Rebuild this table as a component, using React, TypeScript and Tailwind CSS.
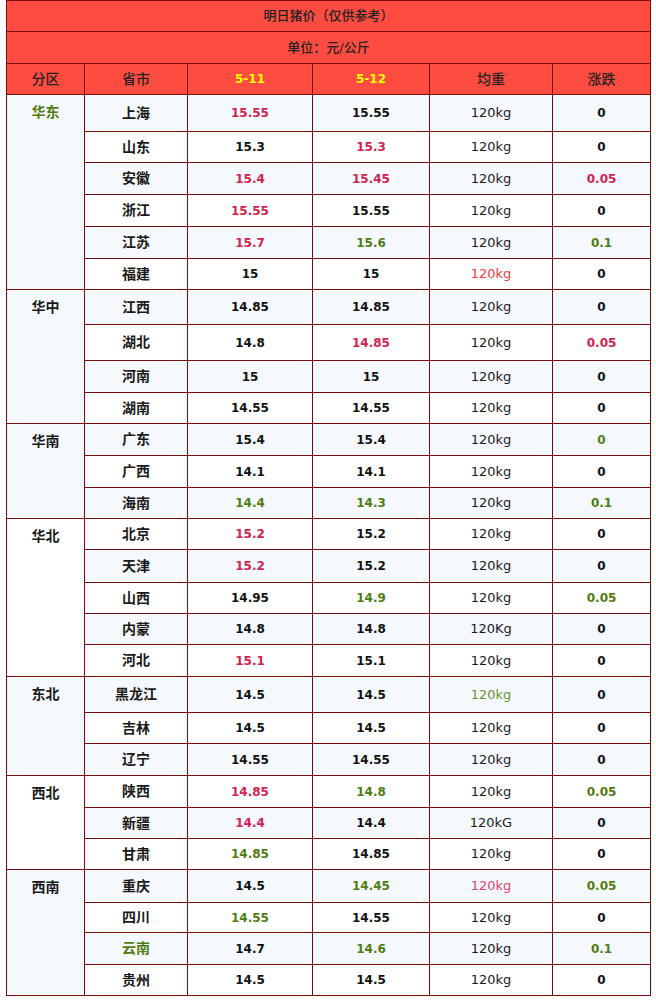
import React from 'react';

type Tone = 'k' | 'r' | 'g' | 'lr' | 'lg' | 'pk' | 'n';

type Row = {
  region?: string;
  span?: number;
  regionTone?: Tone;
  province: string;
  provinceTone?: Tone;
  p1: string;
  t1?: Tone;
  p2: string;
  t2?: Tone;
  weight?: string;
  tw?: Tone;
  diff: string;
  td?: Tone;
  h: string;
};

const tones: Record<Tone, string> = {
  k: 'text-[#111111]',
  r: 'text-[#d0234f]',
  g: 'text-[#4f7d12]',
  lr: 'text-[#ee4040]',
  lg: 'text-[#6a9432]',
  pk: 'text-[#d8466c]',
  n: 'text-[#1a1a1a]',
};

const rows: Row[] = [
  { region: '华东', span: 6, regionTone: 'g', province: '上海', p1: '15.55', t1: 'r', p2: '15.55', diff: '0', h: 'h-[37px]' },
  { province: '山东', p1: '15.3', p2: '15.3', t2: 'r', diff: '0', h: 'h-[31px]' },
  { province: '安徽', p1: '15.4', t1: 'r', p2: '15.45', t2: 'r', diff: '0.05', td: 'r', h: 'h-[32px]' },
  { province: '浙江', p1: '15.55', t1: 'r', p2: '15.55', diff: '0', h: 'h-[32px]' },
  { province: '江苏', p1: '15.7', t1: 'r', p2: '15.6', t2: 'g', diff: '0.1', td: 'g', h: 'h-[32px]' },
  { province: '福建', p1: '15', p2: '15', tw: 'lr', diff: '0', h: 'h-[31px]' },

  { region: '华中', span: 4, province: '江西', p1: '14.85', p2: '14.85', diff: '0', h: 'h-[35px]' },
  { province: '湖北', p1: '14.8', p2: '14.85', t2: 'r', diff: '0.05', td: 'r', h: 'h-[36px]' },
  { province: '河南', p1: '15', p2: '15', diff: '0', h: 'h-[32px]' },
  { province: '湖南', p1: '14.55', p2: '14.55', diff: '0', h: 'h-[31px]' },

  { region: '华南', span: 3, province: '广东', p1: '15.4', p2: '15.4', diff: '0', td: 'g', h: 'h-[32px]' },
  { province: '广西', p1: '14.1', p2: '14.1', diff: '0', h: 'h-[32px]' },
  { province: '海南', p1: '14.4', t1: 'g', p2: '14.3', t2: 'g', diff: '0.1', td: 'g', h: 'h-[31px]' },

  { region: '华北', span: 5, province: '北京', p1: '15.2', t1: 'r', p2: '15.2', diff: '0', h: 'h-[31px]' },
  { province: '天津', p1: '15.2', t1: 'r', p2: '15.2', diff: '0', h: 'h-[33px]' },
  { province: '山西', p1: '14.95', p2: '14.9', t2: 'g', diff: '0.05', td: 'g', h: 'h-[31px]' },
  { province: '内蒙', p1: '14.8', p2: '14.8', weight: '120Kg', diff: '0', h: 'h-[31px]' },
  { province: '河北', p1: '15.1', t1: 'r', p2: '15.1', diff: '0', h: 'h-[32px]' },

  { region: '东北', span: 3, province: '黑龙江', p1: '14.5', p2: '14.5', tw: 'lg', diff: '0', h: 'h-[36px]' },
  { province: '吉林', p1: '14.5', p2: '14.5', diff: '0', h: 'h-[31px]' },
  { province: '辽宁', p1: '14.55', p2: '14.55', diff: '0', h: 'h-[32px]' },

  { region: '西北', span: 3, province: '陕西', p1: '14.85', t1: 'r', p2: '14.8', t2: 'g', diff: '0.05', td: 'g', h: 'h-[32px]' },
  { province: '新疆', p1: '14.4', t1: 'r', p2: '14.4', weight: '120kG', diff: '0', h: 'h-[31px]' },
  { province: '甘肃', p1: '14.85', t1: 'g', p2: '14.85', diff: '0', h: 'h-[31px]' },

  { region: '西南', span: 4, province: '重庆', p1: '14.5', p2: '14.45', t2: 'g', tw: 'pk', diff: '0.05', td: 'g', h: 'h-[33px]' },
  { province: '四川', p1: '14.55', t1: 'g', p2: '14.55', diff: '0', h: 'h-[30px]' },
  { province: '云南', provinceTone: 'g', p1: '14.7', p2: '14.6', t2: 'g', diff: '0.1', td: 'g', h: 'h-[32px]' },
  { province: '贵州', p1: '14.5', p2: '14.5', diff: '0', h: 'h-[31px]' },
];

const cell = 'border border-[#7a0c0c] p-0 text-center align-middle';
const num = 'text-[12px] font-bold';

export default function App() {
  return (
    <div
      className="w-[656px] min-h-[1000px] bg-white"
      style={{ fontFamily: '"DejaVu Sans", "Noto Sans CJK SC", sans-serif' }}
    >
      <table className="ml-[6px] w-[644px] table-fixed border-collapse">
        <colgroup>
          <col className="w-[78px]" />
          <col className="w-[103px]" />
          <col className="w-[125px]" />
          <col className="w-[117px]" />
          <col className="w-[123px]" />
          <col className="w-[98px]" />
        </colgroup>
        <thead>
          <tr className="h-[31px] bg-[#fe4c40]">
            <th colSpan={6} className={`${cell} text-[13px] font-medium text-[#222222]`}>
              明日猪价（仅供参考）
            </th>
          </tr>
          <tr className="h-[32px] bg-[#fe4c40]">
            <th colSpan={6} className={`${cell} text-[13px] font-medium text-[#222222]`}>
              单位：元/公斤
            </th>
          </tr>
          <tr className="h-[31px] bg-[#fe4c40] text-[14px] text-[#222222]">
            <th className={`${cell} font-medium`}>分区</th>
            <th className={`${cell} font-medium`}>省市</th>
            <th className={`${cell} ${num} text-[#ffff00]`}>5-11</th>
            <th className={`${cell} ${num} text-[#ffff00]`}>5-12</th>
            <th className={`${cell} font-medium`}>均重</th>
            <th className={`${cell} font-medium`}>涨跌</th>
          </tr>
        </thead>
        <tbody>
          {rows.map((r, i) => (
            <tr key={r.province} className={`${r.h} ${i % 2 === 0 ? 'bg-[#f5f9fe]' : 'bg-white'}`}>
              {r.region && (
                <td
                  rowSpan={r.span}
                  className={`${cell} !align-top pt-[7px] text-[14px] font-bold ${tones[r.regionTone ?? 'n']}`}
                >
                  {r.region}
                </td>
              )}
              <td className={`${cell} text-[14px] font-bold ${tones[r.provinceTone ?? 'n']}`}>
                {r.province}
              </td>
              <td className={`${cell} ${num} ${tones[r.t1 ?? 'k']}`}>{r.p1}</td>
              <td className={`${cell} ${num} ${tones[r.t2 ?? 'k']}`}>{r.p2}</td>
              <td className={`${cell} text-[13px] ${tones[r.tw ?? 'n']}`}>{r.weight ?? '120kg'}</td>
              <td className={`${cell} ${num} ${tones[r.td ?? 'k']}`}>{r.diff}</td>
            </tr>
          ))}
        </tbody>
      </table>
    </div>
  );
}
